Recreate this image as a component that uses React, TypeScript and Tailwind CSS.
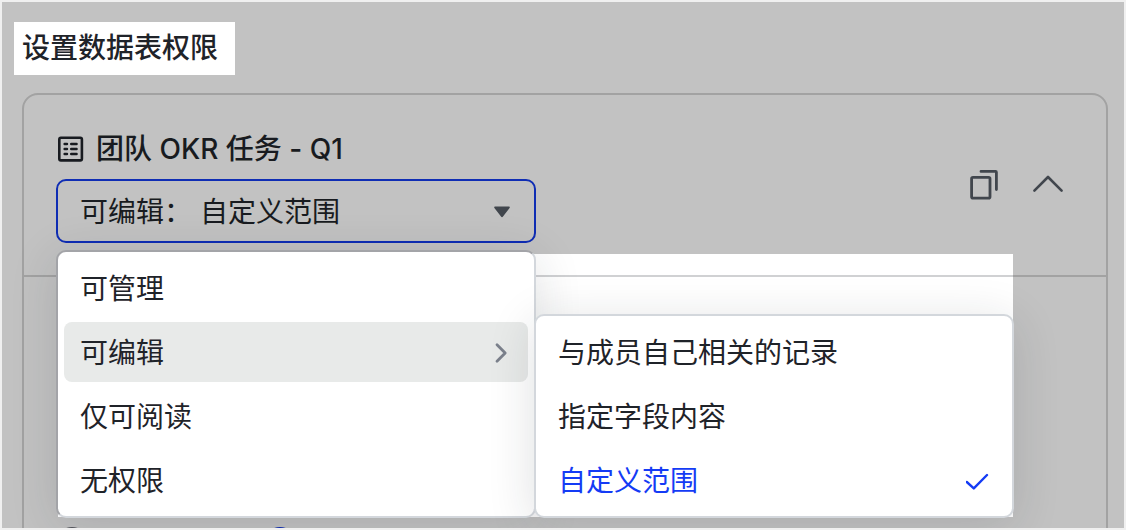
import { useState } from "react";
import clsx from "clsx";

interface MenuItem {
  id: string;
  label: string;
  hasChildren?: boolean;
}

const levels: MenuItem[] = [
  { id: "manage", label: "可管理" },
  { id: "edit", label: "可编辑", hasChildren: true },
  { id: "read", label: "仅可阅读" },
  { id: "none", label: "无权限" },
];

const scopes: MenuItem[] = [
  { id: "own", label: "与成员自己相关的记录" },
  { id: "fields", label: "指定字段内容" },
  { id: "custom", label: "自定义范围" },
];

const TableIcon = () => (
  <svg width="28" height="28" viewBox="0 0 28 28" fill="none" stroke="currentColor">
    <rect x="3.3" y="2.8" width="22.6" height="22.6" rx="1.6" strokeWidth="2.6" />
    <path
      d="M8.600 9h2.400M15.200 9H20.600M8.600 14h2.400M15.200 14H20.600M8.600 19h2.400M15.200 19H20.600"
      strokeWidth="2.4"
      strokeLinecap="round"
    />
  </svg>
);

const CopyIcon = () => (
  <svg width="32" height="32" viewBox="0 0 32 32" fill="none" stroke="currentColor" strokeWidth="2.8">
    <rect x="3.6" y="8.4" width="18.4" height="20.8" rx="1.4" />
    <path d="M13 2.400h14.600a.8.8 0 0 1 .8.800v17.400" strokeLinecap="round" />
  </svg>
);

const ChevronUpIcon = () => (
  <svg width="32" height="32" viewBox="0 0 32 32" fill="none" stroke="currentColor" strokeWidth="2.6">
    <path d="M2.400 21.600 16 8l13.600 13.600" strokeLinecap="round" strokeLinejoin="round" />
  </svg>
);

const ChevronRightIcon = () => (
  <svg
    className="text-[#7b818c]"
    width="24"
    height="24"
    viewBox="0 0 24 24"
    fill="none"
    stroke="currentColor"
    strokeWidth="2.8"
  >
    <path d="m9 3.800 8.200 8.200L9 20.200" strokeLinecap="round" strokeLinejoin="round" />
  </svg>
);

const CheckIcon = () => (
  <svg width="24" height="24" viewBox="0 0 24 24" fill="none" stroke="currentColor" strokeWidth="2.4">
    <path d="m0.800 13 7 6.400L21 6" strokeLinecap="round" strokeLinejoin="round" />
  </svg>
);

const App: React.FC = () => {
  const [level, setLevel] = useState<string>("edit");
  const [scope, setScope] = useState<string>("custom");
  const [range, setRange] = useState<string>("all");

  const levelLabel = levels.find((l) => l.id === level)?.label;
  const scopeLabel = scopes.find((s) => s.id === scope)?.label;

  return (
    <div className="h-screen overflow-hidden border-2 border-[#f0f0f0] bg-[#c2c2c2] pt-5 font-[Inter,'Noto_Sans_CJK_SC',sans-serif] text-[28px] text-[#1f2329]">
      <h1 className="ml-3 w-fit bg-white pl-2 pr-[17px] font-medium leading-[53px]">
        设置数据表权限
      </h1>

      <section className="ml-5 mr-4 mt-[18px] rounded-2xl border-2 border-[#a2a2a2]">
        <header className="flex items-center justify-between border-b-2 border-[#a2a2a2] px-8 py-8">
          <div>
            <h2 className="flex h-11 items-center gap-3 text-[#181b20] font-medium">
              <TableIcon />
              团队 OKR 任务 - Q1
            </h2>

            <div className="relative mt-2 w-[480px]">
              <button
                type="button"
                aria-haspopup="menu"
                aria-expanded="true"
                className="flex h-16 w-full items-center justify-between rounded-[10px] border-2 border-[#0f2db4] pl-[22px] pr-6 pt-0.5 text-[#181b20]"
              >
                <span className="flex gap-2">
                  <span>{levelLabel}：</span>
                  <span>{scopeLabel}</span>
                </span>
                <svg className="text-[#41464d]" width="16" height="12" viewBox="0 0 16 12" fill="currentColor">
                  <path d="M1 .5h14c.8 0 1.1.8.6 1.400L9 10.600c-.6.8-1.400.8-2 0L.4 1.900C-.1 1.300.2.5 1 .5z" />
                </svg>
              </button>

              {/* Highlighted area behind the open menus */}
              <div className="absolute left-0.5 top-[75px] h-[263px] w-[955px] bg-white">
                <div className="h-[23px] border-b-2 border-[#d0d1d3]" />
              </div>

              {/* Permission level menu */}
              <ul
                role="menu"
                className="absolute left-0 top-[71px] flex w-[480px] flex-col gap-1 rounded-[10px] border-2 border-b-[#d3d7dc] border-l-[#a3a4a8] border-r-[#d3d7dc] border-t-[#a3a4a8] bg-white p-1.5 shadow-[0_8px_48px_rgba(31,35,41,0.14)]"
              >
                {levels.map((item) => (
                  <li key={item.id} role="none">
                    <button
                      type="button"
                      role="menuitem"
                      onClick={() => setLevel(item.id)}
                      className={clsx(
                        "flex h-15 w-full items-center justify-between rounded-lg px-4 pt-0.5",
                        item.id === level && "bg-[#e8eae9]"
                      )}
                    >
                      {item.label}
                      {item.hasChildren && <ChevronRightIcon />}
                    </button>
                  </li>
                ))}
              </ul>

              {/* Scope submenu */}
              <ul
                role="menu"
                className="absolute left-[478px] top-[135px] flex w-[480px] flex-col gap-1 rounded-[10px] border-2 border-[#d3d7dc] bg-white p-1.5 shadow-[0_8px_48px_rgba(31,35,41,0.14)]"
              >
                {scopes.map((item) => (
                  <li key={item.id} role="none">
                    <button
                      type="button"
                      role="menuitemradio"
                      aria-checked={item.id === scope}
                      onClick={() => setScope(item.id)}
                      className={clsx(
                        "flex h-15 w-full items-center justify-between px-4 pt-0.5",
                        item.id === scope && "text-[#143bf5]"
                      )}
                    >
                      {item.label}
                      {item.id === scope && <CheckIcon />}
                    </button>
                  </li>
                ))}
              </ul>
            </div>
          </div>

          <div className="flex gap-3 text-[#41464d]">
            <button type="button" aria-label="复制" className="flex h-13 w-13 items-center justify-center">
              <CopyIcon />
            </button>
            <button type="button" aria-label="收起" className="flex h-13 w-13 items-center justify-center">
              <ChevronUpIcon />
            </button>
          </div>
        </header>

        <div className="flex gap-44 px-8 pb-8 pt-[250px]">
          <input
            type="radio"
            name="range"
            aria-label="全部"
            checked={range === "part"}
            onChange={() => setRange("part")}
            className="size-8 appearance-none rounded-full border-2 border-[#55585d] checked:border-[#0f2db4]"
          />
          <input
            type="radio"
            name="range"
            aria-label="指定"
            checked={range === "all"}
            onChange={() => setRange("all")}
            className="size-8 appearance-none rounded-full border-2 border-[#55585d] checked:border-[#0f2db4]"
          />
        </div>
      </section>
    </div>
  );
};

export default App;
